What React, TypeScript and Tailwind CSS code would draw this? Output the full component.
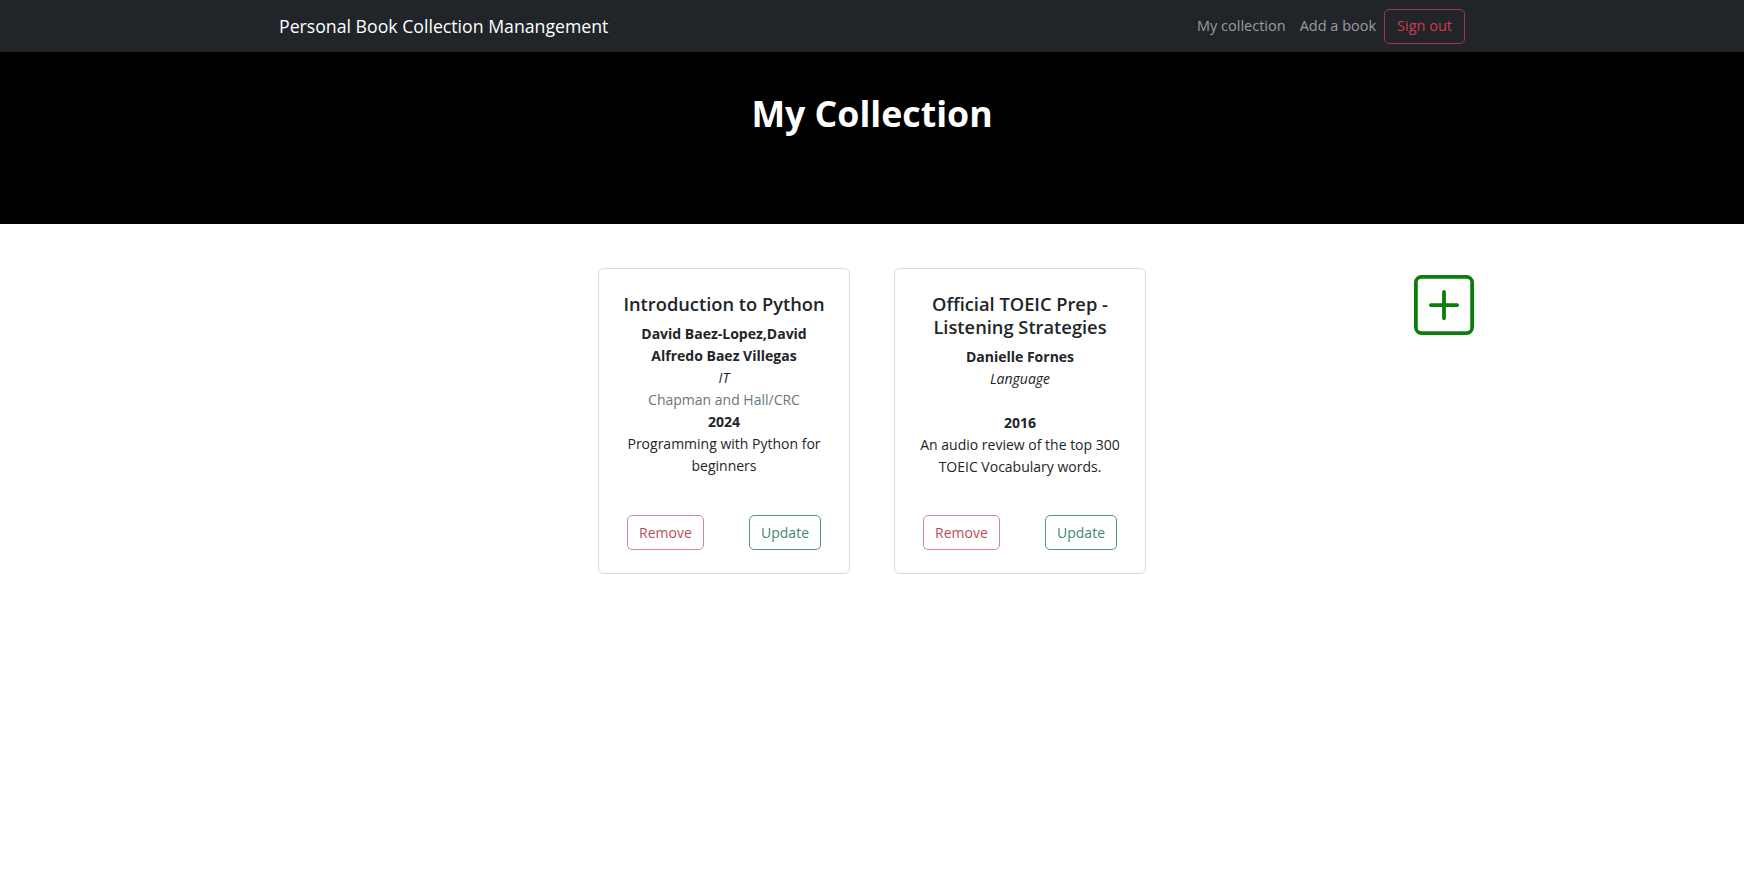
const books = [
  {
    title: 'Introduction to Python',
    authors: 'David Baez-Lopez,David Alfredo Baez Villegas',
    genre: 'IT',
    publisher: 'Chapman and Hall/CRC',
    year: '2024',
    description: 'Programming with Python for beginners',
  },
  {
    title: 'Official TOEIC Prep - Listening Strategies',
    authors: 'Danielle Fornes',
    genre: 'Language',
    publisher: '',
    year: '2016',
    description: 'An audio review of the top 300 TOEIC Vocabulary words.',
  },
];

function PlusSquare() {
  return (
    <svg width="60" height="60" viewBox="0 0 16 16" fill="#0a7d0a">
      <path d="M14 1a1 1 0 0 1 1 1v12a1 1 0 0 1-1 1H2a1 1 0 0 1-1-1V2a1 1 0 0 1 1-1zM2 0a2 2 0 0 0-2 2v12a2 2 0 0 0 2 2h12a2 2 0 0 0 2-2V2a2 2 0 0 0-2-2z" />
      <path d="M8 4a.5.5 0 0 1 .5.5v3h3a.5.5 0 0 1 0 1h-3v3a.5.5 0 0 1-1 0v-3h-3a.5.5 0 0 1 0-1h3v-3A.5.5 0 0 1 8 4" />
    </svg>
  );
}

function BookCard({ book }: { book: (typeof books)[number] }) {
  return (
    <div className="flex h-[306px] w-[252px] flex-col rounded-[6px] border border-[#d9dcdf] bg-white pt-[23px] pb-[23px] text-center text-[#212529]">
      <div className="px-[17px]">
        <h5 className="mb-[8px] text-[18.3px] leading-[23px] font-semibold">{book.title}</h5>
        <p className="font-bold">{book.authors}</p>
        <p className="italic">{book.genre}</p>
        <p className="h-[22px] text-[#6c757d]">{book.publisher}</p>
        <p className="font-bold">{book.year}</p>
        <p>{book.description}</p>
      </div>
      <div className="mt-auto flex justify-between px-[28px]">
        <button className="h-[35px] rounded-[5px] border border-[#d58891] px-[11px] text-[#bb4c59]">Remove</button>
        <button className="h-[35px] rounded-[5px] border border-[#53967b] px-[11px] text-[#3e8a6c]">Update</button>
      </div>
    </div>
  );
}

export default function App() {
  return (
    <div className="min-h-[892px] bg-white font-['Open_Sans',sans-serif] text-[14px] leading-[22px]">
      <nav className="h-[52px] bg-[#212529]">
        <div className="mx-auto flex h-full max-w-[1186px] items-center justify-between">
          <a className="text-[17.7px] text-white">Personal Book Collection Manangement</a>
          <div className="flex items-center text-[14.5px]">
            <a className="px-[7px] text-[#9a9c9f]">My collection</a>
            <a className="px-[7px] text-[#9a9c9f]">Add a book</a>
            <button className="ml-[1px] h-[35px] rounded-[5px] border border-[#a23744] px-[12px] text-[#d23b4b]">Sign out</button>
          </div>
        </div>
      </nav>
      <header className="h-[172px] bg-black pt-[38px] text-center">
        <h1 className="text-[35.7px] leading-[46px] font-bold text-white">My Collection</h1>
      </header>
      <main className="grid grid-cols-[1fr_auto_1fr] pt-[44px]">
        <div />
        <div className="flex gap-[44px]">
          {books.map(b => (
            <BookCard key={b.title} book={b} />
          ))}
        </div>
        <div className="pt-[7px] pl-[268px]">
          <PlusSquare />
        </div>
      </main>
    </div>
  );
}
